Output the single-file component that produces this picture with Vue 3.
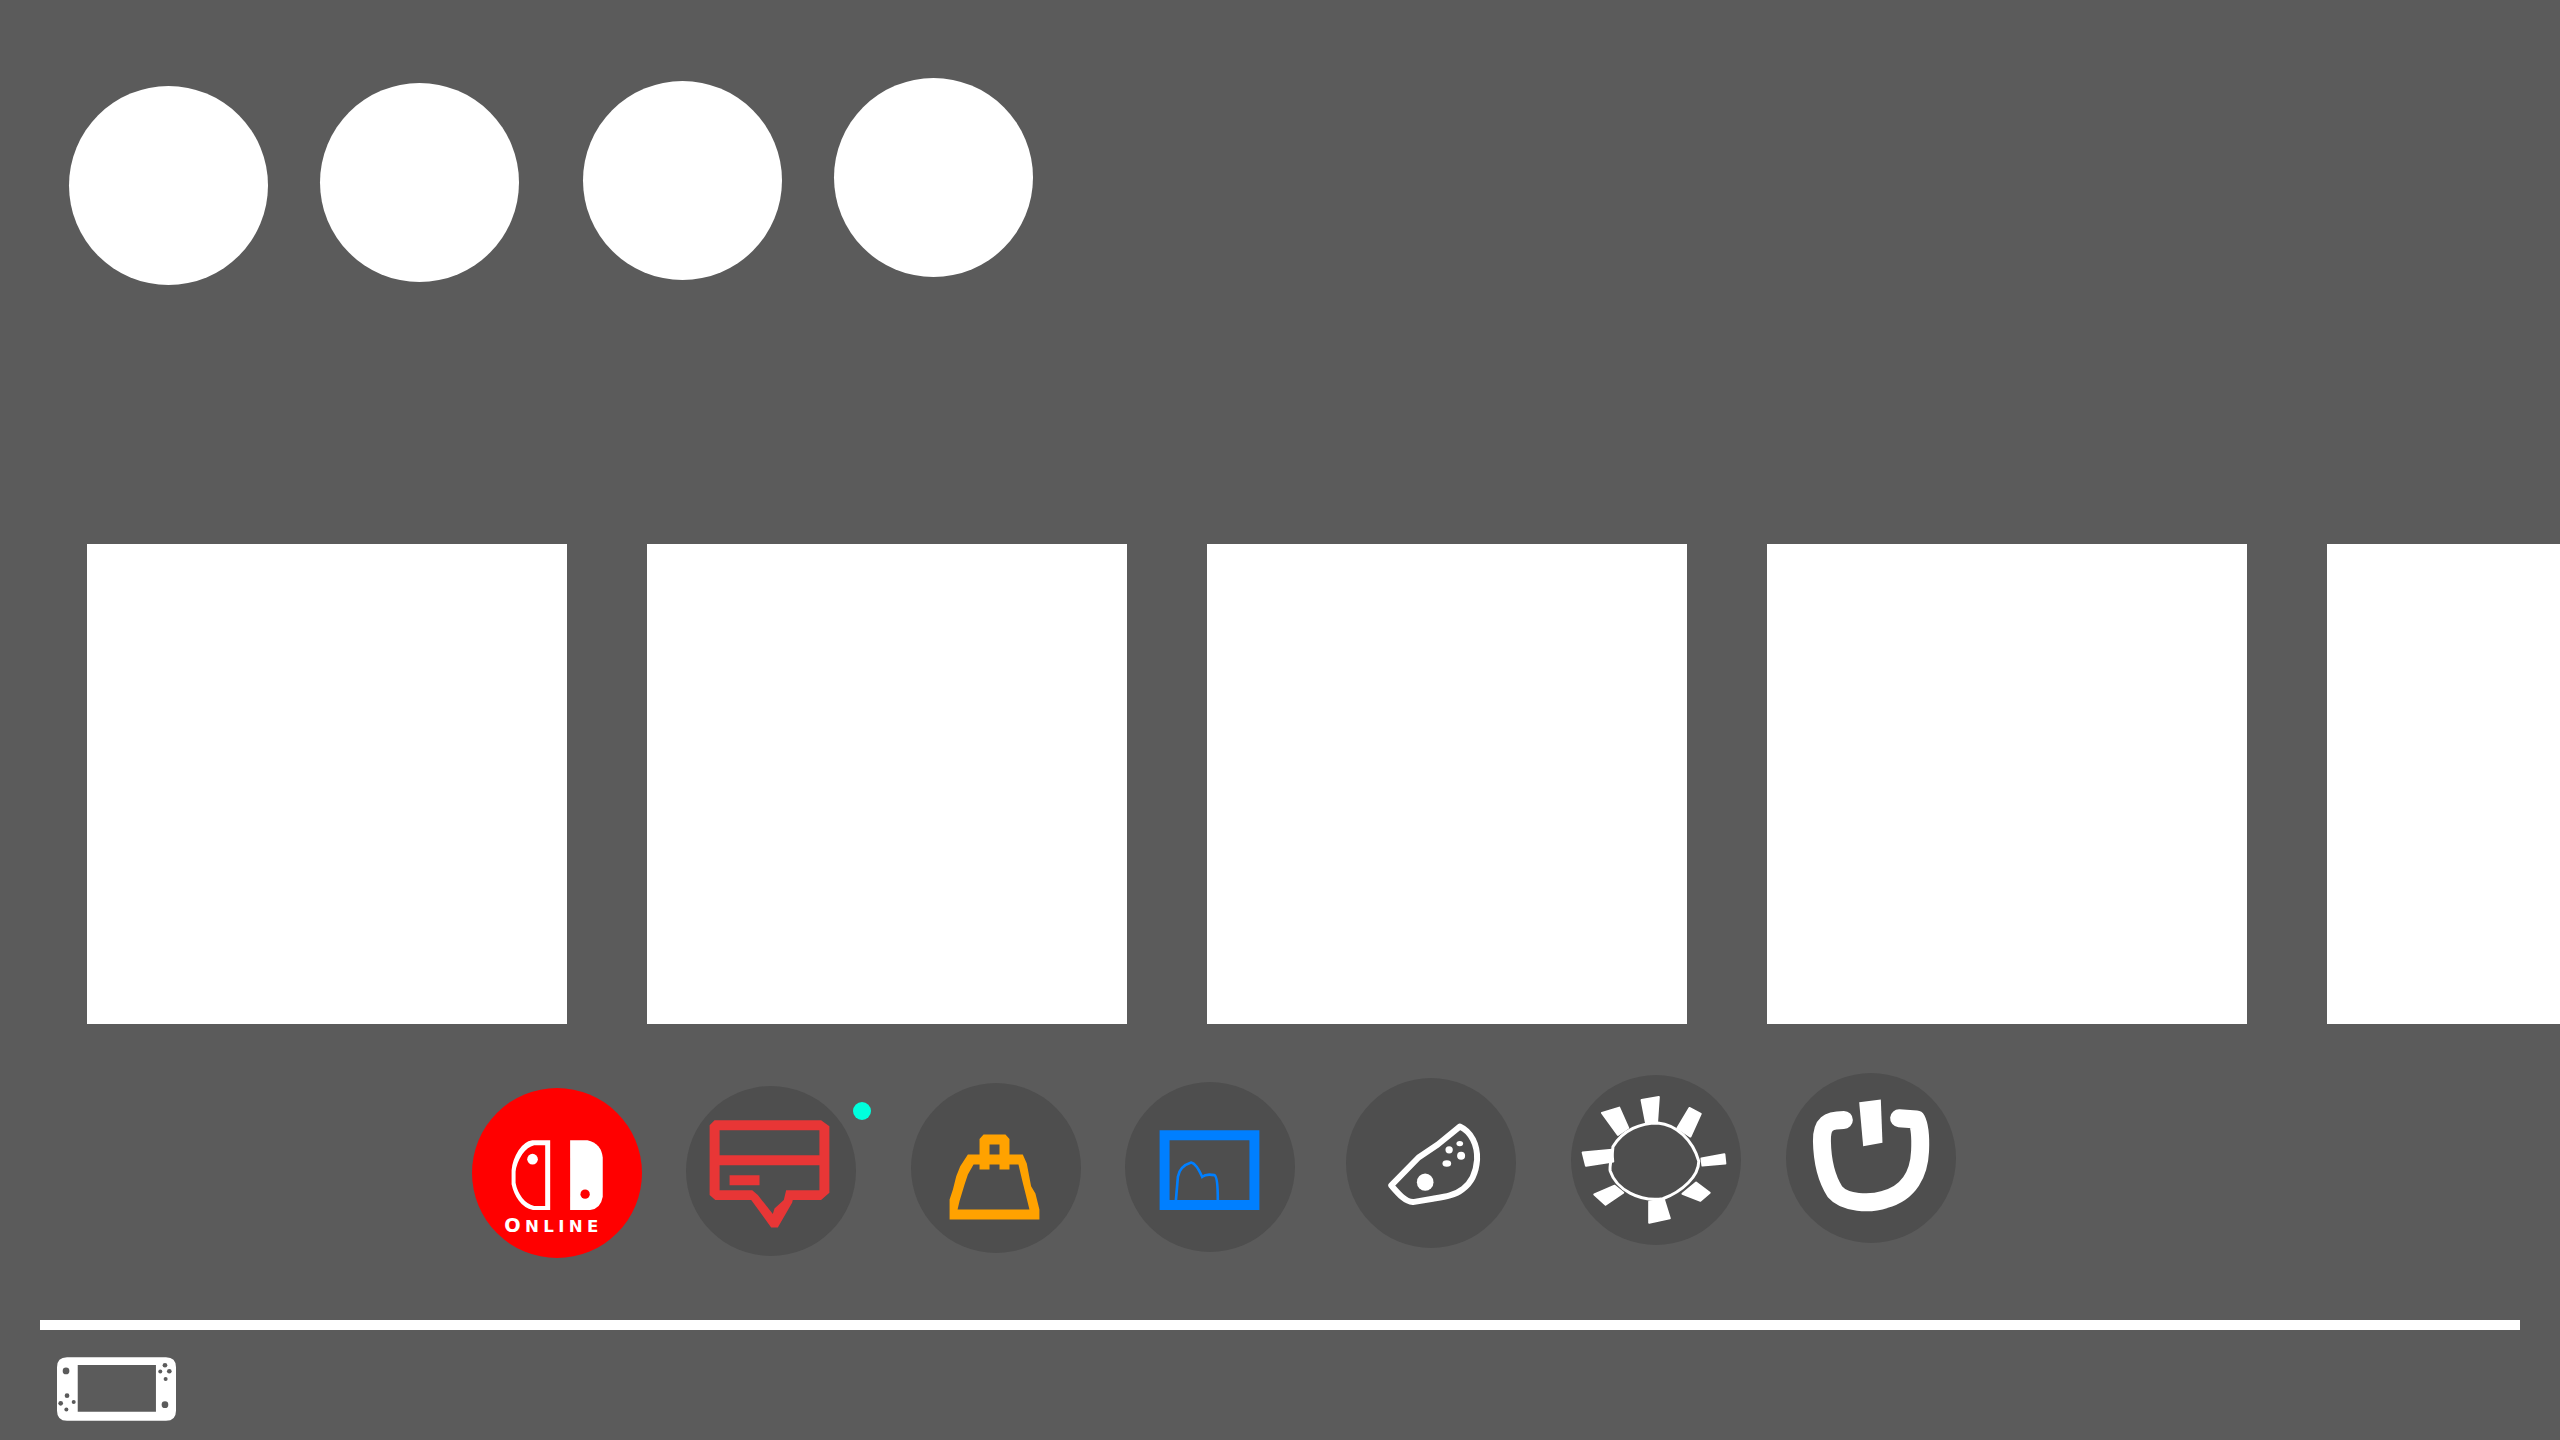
<script setup>
const avatars = [
  { id: 1, left: 69, top: 86 },
  { id: 2, left: 52, top: 83 },
  { id: 3, left: 64, top: 81 },
  { id: 4, left: 52, top: 78 },
]
const tiles = [1, 2, 3, 4, 5]
</script>

<template>
  <div class="screen">
    <div class="avatars">
      <div
        v-for="a in avatars"
        :key="a.id"
        class="avatar"
        :style="{ marginLeft: a.left + 'px', marginTop: a.top + 'px' }"
      ></div>
    </div>

    <div class="tiles">
      <div v-for="t in tiles" :key="t" class="tile"></div>
    </div>

    <div class="dock">
      <button class="round online">
        <svg viewBox="65 83 511 511" class="ico">
          <path fill="#fff" fill-rule="evenodd" d="M300 240H246Q222 244 205 270Q186 300 184 330V372Q190 400 206 422Q222 444 248 450H300ZM285 255H252Q232 260 216 282Q198 310 196 335V368Q200 392 216 414Q230 432 252 438H285Z"/>
          <circle cx="247" cy="297" r="16" fill="#fff"/>
          <path fill="#fff" d="M360 240H412Q454 250 458 292V410Q452 446 420 450H360Z"/>
          <circle cx="405" cy="402" r="14" fill="#f00"/>
          <text x="162" y="516" class="online-text" textLength="283" lengthAdjust="spacing"><tspan class="online-cap">O</tspan>NLINE</text>
        </svg>
      </button>

      <button class="round news">
        <svg viewBox="709 77 511 511" class="ico">
          <path fill="#e83636" fill-rule="evenodd" d="M795 180H1115L1140 198V398L1115 420H1030L1028 428L985 502H965L905 420H797L780 405V195ZM810 210V285H1110V210ZM810 315V390H908L925 405L970 462L975 445L1003 420L1010 390H1110V315ZM840 345H930V375H840Z"/>
        </svg>
        <span class="badge"></span>
      </button>

      <button class="round shop">
        <svg viewBox="64 70 511 511" class="ico">
          <path fill="#ffa200" fill-rule="evenodd" d="M180 480H450V450L438 402L425 380L412 312L400 285H360V238L348 225H282L270 238V285H235L212 320L200 350L190 390L180 420ZM300 255V285H330V255ZM204 450H420L410 410L400 370L387 315H360V330H330V315H300V330H270V315H252L235 345L225 375L210 425Z"/>
        </svg>
      </button>

      <button class="round album">
        <svg viewBox="706 65 511 511" class="ico">
          <path fill="#007fff" fill-rule="evenodd" d="M810 210H1110V450H810ZM840 240V420H1080V240Z"/>
          <path fill="none" stroke="#007fff" stroke-width="8" d="M859 420L865 350Q870 318 905 307Q920 310 938 350Q950 340 975 345Q985 350 985 420"/>
        </svg>
      </button>

      <button class="round controllers">
        <svg viewBox="49 54 511 511" class="ico">
          <path fill="none" stroke="#fff" stroke-width="18" stroke-linejoin="round" d="M185 377L267 293L325 254L391 200C425 215 445 255 443 300C440 340 425 370 400 388C375 408 340 412 310 417L250 427C225 425 205 400 185 377Z"/>
          <ellipse cx="287" cy="367" rx="25" ry="26" fill="#fff"/>
          <circle cx="359" cy="270" r="11" fill="#fff"/>
          <ellipse cx="391" cy="251" rx="10" ry="8" fill="#fff"/>
          <circle cx="395" cy="288" r="12" fill="#fff"/>
          <ellipse cx="352" cy="311" rx="13" ry="10" fill="#fff"/>
        </svg>
      </button>

      <button class="round settings">
        <svg viewBox="724 46 511 511" class="ico">
          <path fill="none" stroke="#fff" stroke-width="9" d="M850 262C880 210 935 190 985 190C1040 195 1090 240 1108 305C1108 350 1060 395 1000 418C930 428 860 390 842 335C838 320 848 295 850 262Z"/>
          <path fill="#fff" stroke="#fff" stroke-width="6" stroke-linejoin="round" d="M936 121L988 112L983 185L949 188ZM1080 145L1114 163L1083 231L1044 205ZM1116 297L1185 284L1188 312L1119 318ZM1100 369L1141 400L1113 424L1059 403ZM959 427L1003 419L1021 477L959 490ZM855 379L881 400L828 436L794 405ZM759 279L848 271L851 306L769 319ZM817 160L869 144L896 205L865 226Z"/>
        </svg>
      </button>

      <button class="round power">
        <svg viewBox="48 40 511 511" class="ico">
          <path fill="none" stroke="#fff" stroke-width="54" stroke-linecap="round" stroke-linejoin="round" d="M222 181C175 181 155 192 156 245C157 300 165 350 195 397C225 432 300 435 345 420C420 400 448 340 451 275C453 230 448 195 440 180L388 176"/>
          <path fill="#fff" d="M268 128L333 120L338 250L280 260Z"/>
        </svg>
      </button>
    </div>

    <div class="rule"></div>

    <div class="footer">
      <svg viewBox="82 172 356 190" class="device">
        <path fill="#fff" fill-rule="evenodd" d="M112 172H408Q438 172 438 202V332Q438 362 408 362H112Q82 362 82 332V202Q82 172 112 172ZM144 195V335H378V195Z"/>
        <g fill="#5b5b5b">
          <circle cx="109" cy="213" r="10"/>
          <circle cx="112" cy="287" r="7"/>
          <circle cx="93" cy="310" r="7"/>
          <circle cx="132" cy="306" r="6"/>
          <circle cx="110" cy="328" r="6"/>
          <circle cx="405" cy="196" r="7"/>
          <circle cx="391" cy="215" r="6"/>
          <circle cx="418" cy="214" r="7"/>
          <circle cx="407" cy="237" r="6"/>
          <circle cx="405" cy="314" r="10"/>
        </g>
      </svg>
    </div>
  </div>
</template>

<style>
html, body {
  margin: 0;
  background: #5b5b5b;
}
</style>

<style scoped>
.screen {
  width: 2560px;
  height: 1440px;
  background: #5b5b5b;
  overflow: hidden;
  display: flex;
  flex-direction: column;
}
.avatars {
  display: flex;
  align-items: flex-start;
  height: 286px;
}
.avatar {
  width: 199px;
  height: 199px;
  border-radius: 50%;
  background: #fff;
}
.tiles {
  display: flex;
  gap: 80px;
  margin-top: 258px;
  padding-left: 87px;
}
.tile {
  flex: none;
  width: 480px;
  height: 480px;
  background: #fff;
}
.dock {
  display: flex;
  align-items: flex-start;
  margin-top: 49px;
  padding-left: 472px;
  height: 247px;
}
.round {
  flex: none;
  position: relative;
  width: 170px;
  height: 170px;
  padding: 0;
  border: none;
  border-radius: 50%;
  background: #4e4e4e;
}
.online {
  background: #f00;
  margin-top: 15px;
}
.news { margin-left: 44px; margin-top: 13px; }
.shop { margin-left: 55px; margin-top: 10px; }
.album { margin-left: 44px; margin-top: 9px; }
.controllers { margin-left: 51px; margin-top: 5px; }
.settings { margin-left: 55px; margin-top: 2px; }
.power { margin-left: 45px; margin-top: 0; }
.ico {
  display: block;
  width: 170px;
  height: 170px;
  overflow: visible;
}
.online-text {
  font-family: "DejaVu Sans", sans-serif;
  font-weight: 700;
  font-size: 50px;
  fill: #fff;
}
.online-cap {
  font-size: 58px;
}
.badge {
  position: absolute;
  top: 16px;
  right: -15px;
  width: 18px;
  height: 18px;
  border-radius: 50%;
  background: #00ffdd;
}
.rule {
  height: 10px;
  margin: 0 40px;
  background: #fff;
}
.footer {
  padding: 27px 0 0 57px;
}
.device {
  display: block;
  width: 119px;
  height: 64px;
}
</style>
